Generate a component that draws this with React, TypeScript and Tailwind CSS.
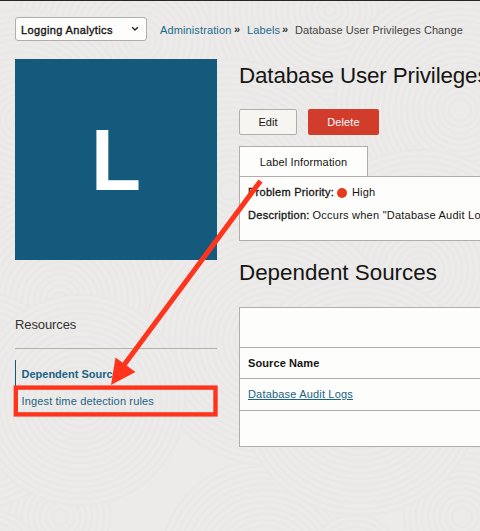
import React from "react";

// Centres of the engraved discs; later discs cover earlier ones.
const discs: [number, number, number][] = [
  [140, 40, 130], [330, 10, 120], [20, 120, 110], [460, 110, 125], [230, 190, 130],
  [-20, 290, 120], [420, 270, 120], [265, 565, 105], [60, 300, 110], [270, 340, 125],
  [480, 400, 90], [60, 517, 50], [462, 517, 58], [-30, 400, 110], [80, 400, 105],
  [360, 395, 120], [355, 560, 45], [-10, 560, 50],
];

function Backdrop() {
  return (
    <svg className="pointer-events-none absolute inset-0" width="480" height="531" aria-hidden="true">
      {discs.map(([x, y, r]) => (
        <g key={`${x}-${y}`} fill="#ecebea" stroke="#e9e8e7" strokeWidth="2.5">
          {Array.from({ length: Math.floor(r / 6) }, (_, i) => (
            <circle key={i} cx={x} cy={y} r={r - i * 6} />
          ))}
        </g>
      ))}
    </svg>
  );
}

function Chevrons() {
  return <span className="ml-[2px] mr-[7px] w-[6px] text-[11px] font-bold leading-none text-[#333] pb-[1px]">»</span>;
}

function Header() {
  return (
    <header className="flex h-[59px] items-start border-t border-[#2b2523] pl-[15px] pt-[16px]">
      <div className="flex h-[24px] w-[132px] shrink-0 items-center justify-between rounded-[3px] border border-[#b2ada8] bg-[#fdfdfb] pl-[5px] pr-[7px]">
        <span className="pt-[2px] text-[11px] tracking-[0.36px] [-webkit-text-stroke:0.35px_#161513]">Logging Analytics</span>
        <svg width="8" height="6" viewBox="0 0 8 6" fill="none" stroke="#222" strokeWidth="1.4">
          <path d="M1.2 1.2 4 4 6.8 1.2" />
        </svg>
      </div>
      <nav className="ml-[13px] flex h-[26px] items-center whitespace-nowrap text-[11px] text-[#1b6a8c]">
        <span className="w-[72px] tracking-[0.12px]">Administration</span>
        <Chevrons />
        <span className="w-[33px] tracking-[0.12px]">Labels</span>
        <Chevrons />
        <span className="tracking-[0.07px] text-[#444341]">Database User Privileges Change</span>
      </nav>
    </header>
  );
}

function Sidebar() {
  return (
    <aside className="w-[202px] shrink-0">
      <div className="flex h-[201px] items-center justify-center bg-[#135a7d] font-['Liberation_Sans',Arial,sans-serif] text-[88px] font-bold leading-none text-white">
        <span className="scale-x-[0.93]">L</span>
      </div>
      <h3 className="mt-[55px] box-border h-[34px] border-b border-[#b5b0a4] text-[13px] leading-[20px] tracking-[-0.1px] text-[#33312f]">Resources</h3>
      <div className="mt-[11px] flex h-[26px] items-center border-l border-[#135a7d] pl-[5.5px] pt-[2px] text-[11px] font-bold text-[#1b6385]">
        Dependent Sources
      </div>
      <div className="flex h-[31px] items-center pl-[6.5px] text-[11px] tracking-[0.15px] text-[#1b6385]">
        Ingest time detection rules
      </div>
    </aside>
  );
}

function Main() {
  return (
    <main className="ml-[22px] w-[241px] shrink-0 overflow-hidden whitespace-nowrap">
      <h1 className="h-[50px] text-[22.4px] leading-[34px] tracking-[-0.13px]">Database User Privileges Change</h1>
      <div className="flex gap-[11px] text-[11px]">
        <button className="h-[26px] w-[58px] rounded-[2px] border border-[#b2ada5] bg-[#f6f5f2]">Edit</button>
        <button className="h-[26px] w-[71px] rounded-[2px] bg-[#d13c2b] tracking-[0.1px] text-white">Delete</button>
      </div>
      <div className="mt-[11px] flex h-[30px] w-[129px] items-center justify-center border border-b-0 border-[#b2ada8] bg-[#fdfdfb] pt-[2px] text-[11px] tracking-[0.14px]">
        Label Information
      </div>
      <section className="h-[65px] w-[900px] border border-[#b2ada8] bg-[#fdfdfb] pl-[8px] pt-[4px] text-[11px]">
        <div className="flex h-[23px] items-center">
          <span className="w-[87px] tracking-[0.28px] [-webkit-text-stroke:0.3px_#161513]">Problem Priority:</span>
          <i className="ml-[2px] mr-[5px] size-[10px] rounded-full bg-[#e33b1c]" />
          <span className="tracking-[0.15px]">High</span>
        </div>
        <div className="flex h-[23px] items-center">
          <span className="w-[64.5px] tracking-[0.3px] [-webkit-text-stroke:0.3px_#161513]">Description:</span>
          <span className="tracking-[0.24px]">Occurs when "Database Audit Logs"</span>
        </div>
      </section>
      <h2 className="mt-[15px] h-[51px] text-[22.4px] leading-[34px]">Dependent Sources</h2>
      <section className="w-[900px] border border-[#b2ada8] bg-[#fdfdfb] text-[11px]">
        <div className="h-[40px] border-b border-[#b2ada8]" />
        <div className="flex h-[31px] items-center border-b border-[#b2ada8] pl-[8px] font-bold tracking-[0.1px]">Source Name</div>
        <div className="flex h-[32px] items-center border-b border-[#b2ada8] pl-[8px]">
          <a className="tracking-[0.18px] text-[#1b6385] underline underline-offset-1">Database Audit Logs</a>
        </div>
        <div className="h-[35px]" />
      </section>
    </main>
  );
}

function Callout() {
  return (
    <svg className="pointer-events-none absolute inset-0" width="480" height="531" aria-hidden="true">
      <path d="M260.5 181 124 365" stroke="#ff341c" strokeWidth="5" />
      <path d="M111 385 115.5 357.5 135.5 372Z" fill="#ff341c" />
      <rect x="15.8" y="387.6" width="199.7" height="26.8" fill="none" stroke="#ff341c" strokeWidth="4.4" />
    </svg>
  );
}

export default function App() {
  return (
    <div className="relative h-[531px] w-[480px] overflow-hidden bg-[#ecebea] font-['Liberation_Sans',Arial,sans-serif] text-[#161513]">
      <Backdrop />
      <div className="relative">
        <Header />
        <div className="flex pl-[15px]">
          <Sidebar />
          <Main />
        </div>
      </div>
      <Callout />
    </div>
  );
}
